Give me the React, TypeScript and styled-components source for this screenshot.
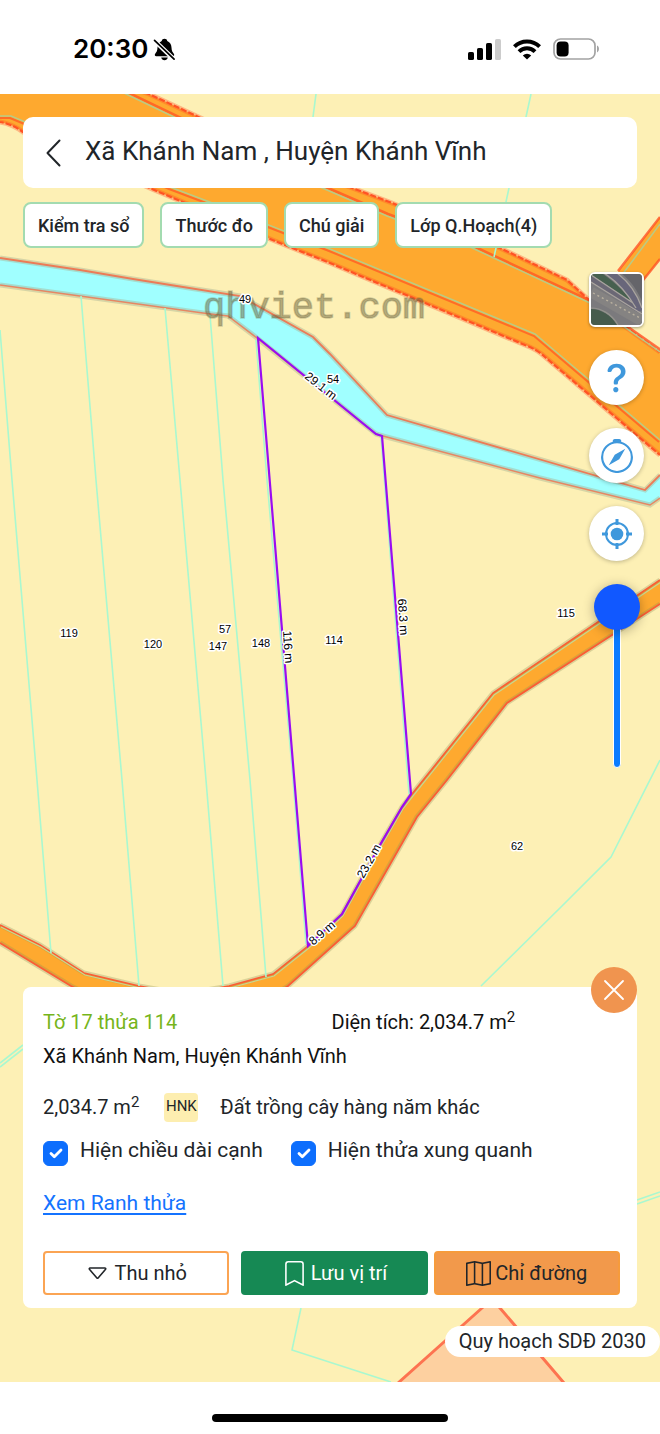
import React, { useState } from "react";
import styled, { createGlobalStyle } from "styled-components";
import { BsBookmark, BsCaretDown, BsCompass, BsMap, BsQuestionLg } from "react-icons/bs";

const GlobalStyle = createGlobalStyle`
  *, *::before, *::after { box-sizing: border-box; }
  html, body { margin: 0; padding: 0; background: #fff; }
  body { font-family: Roboto, "Noto Sans", sans-serif; color: #212529; }
  button, input { font-family: inherit; color: inherit; }
`;

const Page = styled.div`
  display: flex;
  flex-direction: column;
  min-height: 100vh;
`;

const StatusBar = styled.header`
  display: flex;
  justify-content: space-between;
  align-items: center;
  height: 94px;
  padding: 4px 60px 0 73px;
  color: #000;
`;

const StatusGroup = styled.div<{ $gap: number }>`
  display: flex;
  align-items: center;
  gap: ${(p) => p.$gap}px;
`;

const Clock = styled.time`
  font-family: Inter, sans-serif;
  font-weight: 600;
  font-size: 26px;
  line-height: 32px;
`;

const MapArea = styled.main`
  position: relative;
  flex: 1;
  display: flex;
  flex-direction: column;
  padding: 23px 0 25px;
  background: #fdf0b5;
  overflow: hidden;
`;

const MapDrawing = styled.svg`
  position: absolute;
  inset: 0;
  width: 100%;
  height: 100%;
`;

const SearchBar = styled.div`
  position: relative;
  display: flex;
  align-items: center;
  gap: 22px;
  height: 71px;
  margin: 0 23px;
  padding: 0 22px;
  background: #fff;
  border-radius: 10px;
`;

const BackButton = styled.button`
  display: flex;
  padding: 0;
  border: 0;
  background: none;
`;

const PlaceTitle = styled.h1`
  margin: 0;
  padding-bottom: 4px;
  font-size: 26px;
  line-height: 32px;
  font-weight: 400;
`;

const Chips = styled.nav`
  position: relative;
  display: flex;
  flex-wrap: wrap;
  gap: 16px;
  margin: 14px 23px 0;
`;

const Chip = styled.button`
  height: 46px;
  padding: 0 13px;
  border: 2px solid #a3dbb0;
  border-radius: 8px;
  background: #fff;
  font-size: 18px;
  font-weight: 500;
  white-space: nowrap;
`;

const Tools = styled.aside`
  position: relative;
  display: flex;
  flex-direction: column;
  align-items: center;
  align-self: flex-end;
  gap: 23px;
  margin: 24px 16px auto 0;
`;

const LayerButton = styled.button`
  display: flex;
  width: 55px;
  height: 55px;
  padding: 0;
  border: 2px solid #fff;
  border-radius: 6px;
  overflow: hidden;
  background: #777;
  box-shadow: 0 1px 3px rgba(0, 0, 0, 0.35);
`;

const RoundButton = styled.button`
  display: flex;
  align-items: center;
  justify-content: center;
  width: 55px;
  height: 55px;
  padding: 0;
  border: 0;
  border-radius: 50%;
  background: #fff;
  color: #3f98dc;
  box-shadow: 0 1px 4px rgba(0, 0, 0, 0.25);
`;

const SliderBox = styled.div`
  position: relative;
  width: 46px;
  height: 184px;

  &::before {
    content: "";
    position: absolute;
    top: 23px;
    bottom: 0;
    left: 19px;
    width: 8px;
    border: 1px solid #fff;
    border-radius: 4px;
    background: #0a7cff;
  }
`;

const Opacity = styled.input`
  position: relative;
  display: block;
  width: 46px;
  height: 184px;
  margin: 0;
  appearance: none;
  background: transparent;
  writing-mode: vertical-lr;
  direction: rtl;

  &::-webkit-slider-runnable-track {
    width: 46px;
    background: transparent;
  }
  &::-webkit-slider-thumb {
    appearance: none;
    width: 46px;
    height: 46px;
    border-radius: 50%;
    background: #1158ff;
    box-shadow: 0 2px 12px rgba(0, 0, 0, 0.3);
  }
`;

const Card = styled.section`
  position: relative;
  margin: 24px 23px 0;
  padding: 18px 17px 13px 20px;
  background: #fff;
  border-radius: 8px;
  font-size: 20px;
  line-height: 34px;
`;

const CloseButton = styled.button`
  position: absolute;
  top: -20px;
  right: 0;
  display: flex;
  align-items: center;
  justify-content: center;
  width: 46px;
  height: 46px;
  padding: 0;
  border: 0;
  border-radius: 50%;
  background: #f0944f;
`;

const Row = styled.div<{ $top?: number }>`
  display: flex;
  align-items: center;
  height: 34px;
  margin-top: ${(p) => p.$top ?? 0}px;
  white-space: nowrap;
`;

const Cell = styled.span<{ $color?: string }>`
  flex: 1;
  color: ${(p) => p.$color ?? "#111"};
`;

const Sup = styled.sup`
  font-size: 15px;
  line-height: 0;
  vertical-align: 7px;
`;

const Address = styled.div`
  color: #111;
`;

const LandCode = styled.span`
  width: 34px;
  height: 29px;
  margin: 0 22px 0 25px;
  border-radius: 4px;
  background: #fdeeb0;
  font-size: 15px;
  line-height: 27px;
  text-align: center;
`;

const CheckLabel = styled.label`
  display: flex;
  gap: 12px;
  margin-right: 28px;
  font-size: 21px;
`;

const TickBox = styled.span`
  display: grid;
  width: 25px;
  height: 25px;
  margin-top: 8px;

  & > * { grid-area: 1 / 1; }
`;

const Tick = styled.input`
  width: 25px;
  height: 25px;
  margin: 0;
  appearance: none;
  border: 1px solid #0d6efd;
  border-radius: 6px;
  background: #fff;

  &:checked { background: #0d6efd; }
`;

const BorderLink = styled.a`
  color: #1473ff;
  font-size: 21px;
  text-underline-offset: 3px;
`;

const Actions = styled.div`
  display: flex;
  gap: 6px;
  margin-top: 31px;

  & > :first-child { margin-right: 6px; }
`;

const ActionButton = styled.button<{ $bg: string; $line: string; $ink: string }>`
  flex: 1;
  display: flex;
  align-items: center;
  justify-content: center;
  gap: 4px;
  height: 44px;
  padding: 0;
  border: 2px solid ${(p) => p.$line};
  border-radius: 4px;
  background: ${(p) => p.$bg};
  color: ${(p) => p.$ink};
  font-size: 20px;
  line-height: 24px;
  white-space: nowrap;
`;

const PlanBadge = styled.div`
  position: relative;
  align-self: flex-end;
  height: 31px;
  margin-top: 18px;
  padding: 0 14px;
  border-radius: 16px;
  background: #fff;
  font-size: 20px;
  line-height: 31px;
`;

const HomeArea = styled.footer`
  display: flex;
  justify-content: center;
  align-items: flex-end;
  height: 52px;
  padding-bottom: 12px;
`;

const HomeBar = styled.div`
  width: 236px;
  height: 8px;
  border-radius: 4px;
  background: #000;
`;

const roadFill = "#fea92f";
const redLine = "#fb5c35";
const mintLine = "#a9f8d0";

const highwayTop = "M-20 30 L149 94 L347 186 L392 203 L500 248 L567 280 L590 301 L660 352";
const highwayTopInner = "M60 60 L126 94 L320 187 L387 216 L470 247 L590 303 L660 352";
const highwayBottom = "M-10 120 L0 122 Q12 124 23 132 L152 189 L275 241 L330 263 L525 345 Q538 350 545 357 L660 455";
const highwayBottomInner = "M0 116 L11 116 L23 121 L170 187 L215 204 L330 249 L535 334 L548 345 L660 440";
const canalTop = "M0 258 L80 270 L133 279 L183 287 L240 296 L313 337 L330 354 L387 415 L645 490 L660 475";
const canalBottom = "M0 285 L80 296 L167 308 L203 313 L228 316 L257 338 L376 434 L383 436 L540 478 L650 505 L660 498";
const laneTop = "M660 580 L493 693 L412 794 L402 807 L380 845 L342 914 L308 946 L273 974 L229 986 L184 994 L139 986 L84 973 L40 945 L0 925";
const laneBottom = "M660 604 L507 703 L447 780 L417 817 L355 926 L288 986 L250 1010 L120 1010 L71 986 L0 943";

const parcelLines = [
  "M0 330 L12 480 L37 780 L51 953",
  "M81 296 L96 480 L122 780 L139 986",
  "M165 308 L180 480 L206 780 L223 986",
  "M210 315 L223 480 L250 780 L266 977",
  "M256 340 L267 480 L293 780 L306 944",
  "M381 437 L409 794",
  "M660 760 L611 857 L562 906 L481 986",
  "M316 94 L313 117",
  "M531 94 L526 117 L509 188 L494 257",
  "M0 1063 L23 1045",
  "M0 1067 L23 1049",
  "M637 1200 L660 1192",
  "M637 1204 L660 1196",
  "M301 1308 L292 1350 L391 1382",
];

const parcelLabels: { text: string; x: number; y: number; turn?: number }[] = [
  { text: "49", x: 245, y: 299 },
  { text: "54", x: 333, y: 379 },
  { text: "119", x: 69, y: 633 },
  { text: "120", x: 153, y: 644 },
  { text: "57", x: 225, y: 629 },
  { text: "147", x: 218, y: 646 },
  { text: "148", x: 261, y: 643 },
  { text: "114", x: 334, y: 640 },
  { text: "115", x: 566, y: 613 },
  { text: "62", x: 517, y: 846 },
  { text: "29.1 m", x: 321, y: 386, turn: 38 },
  { text: "116 m", x: 288, y: 647, turn: 86 },
  { text: "68.3 m", x: 403, y: 617, turn: 86 },
  { text: "23.2 m", x: 369, y: 861, turn: -61 },
  { text: "8.9 m", x: 322, y: 933, turn: -41 },
];

function LandMap() {
  return (
    <MapDrawing viewBox="0 94 660 1288" preserveAspectRatio="xMidYMid slice" aria-hidden="true">
      <path d="M0 94 L149 94 L347 186 L392 203 L500 248 L567 280 L590 301 L660 352 L660 455 L545 357 Q538 350 525 345 L330 263 L275 241 L152 189 L23 132 Q12 124 0 122 Z" fill={roadFill} />
      <path d="M660 217 L618 272 L618 325 L645 278 L660 259 Z" fill={roadFill} />
      <g fill="none" stroke="#ff5324">
        <path d={highwayTop} strokeWidth="5" strokeOpacity="0.35" />
        <path d={highwayBottom} strokeWidth="5" strokeOpacity="0.35" />
        <g strokeWidth="2.2" strokeDasharray="6 2">
          <path d={highwayTop} />
          <path d={highwayBottom} />
        </g>
        <path d={highwayTopInner} strokeWidth="2.5" strokeOpacity="0.75" transform="translate(1 -2)" />
        <path d={highwayBottomInner} strokeWidth="2" strokeOpacity="0.7" transform="translate(-1 2)" />
        <path d="M660 217 L618 271 M660 259 L640 284" strokeWidth="2.5" strokeOpacity="0.8" />
      </g>
      <g fill="none" stroke="#b9cb85" strokeWidth="1.5">
        <path d={highwayTopInner} />
        <path d={highwayBottomInner} />
        <path d="M660 224 L622 275" />
      </g>

      <path d="M0 258 L80 270 L133 279 L183 287 L240 296 L313 337 L330 354 L387 415 L645 490 L660 475 L660 498 L650 505 L540 478 L383 436 L376 434 L257 338 L228 316 L203 313 L167 308 L80 296 L0 285 Z" fill="#a0ffff" />
      <g fill="none">
        <path d={canalTop} stroke="#a8b494" strokeWidth="5" strokeOpacity="0.45" />
        <path d={canalBottom} stroke="#a8b494" strokeWidth="5" strokeOpacity="0.45" />
        <path d={canalTop} stroke={redLine} strokeWidth="1.8" strokeOpacity="0.75" />
        <path d={canalBottom} stroke={redLine} strokeWidth="1.5" strokeOpacity="0.65" />
      </g>

      <path d="M660 580 L493 693 L412 794 L402 807 L380 845 L342 914 L308 946 L273 974 L229 986 L184 994 L139 986 L84 973 L40 945 L0 925 L0 943 L71 986 L120 1010 L250 1010 L288 986 L355 926 L417 817 L447 780 L507 703 L660 604 Z" fill={roadFill} />
      <g fill="none">
        <path d={laneTop} stroke="#8f8d55" strokeWidth="5" strokeOpacity="0.3" />
        <path d={laneBottom} stroke="#8f8d55" strokeWidth="5" strokeOpacity="0.3" />
        <path d={laneTop} stroke={redLine} strokeWidth="1.6" />
        <path d={laneBottom} stroke={redLine} strokeWidth="1.8" />
        <path d={laneTop} stroke="#c8d692" strokeWidth="1.2" transform="translate(1 2)" />
      </g>

      <path d="M398 1382 L482 1308 L491 1300 L500 1308 L564 1382 Z" fill="#fdd0a0" />
      <path d="M398 1383 L482 1308 L491 1300 L500 1308 L564 1383" fill="none" stroke="#fd7350" strokeWidth="3" />

      <g fill="none" stroke={mintLine} strokeWidth="1.6">
        {parcelLines.map((d) => (
          <path key={d} d={d} />
        ))}
      </g>

      <text x="203" y="318" fontFamily="Liberation Mono, monospace" fontSize="37" fill="#6d6740" fillOpacity="0.5" stroke="#6d6740" strokeOpacity="0.3" strokeWidth="1.6">
        qhviet.com
      </text>

      <path d="M258 338 L376 434 L382 436 L411 794 L402 807 L380 845 L342 914 L308 946 Z" fill="none" stroke="#9a0cf2" strokeWidth="2.2" />

      <g fontFamily="Liberation Sans, Arial, sans-serif" fontSize="11" fill="#000" stroke="#fff" strokeWidth="3" strokeLinejoin="round" paintOrder="stroke" textAnchor="middle">
        {parcelLabels.map((l) => (
          <text key={l.text} x={l.x} y={l.y + 4} fontSize={l.turn ? 12 : 11} transform={l.turn ? `rotate(${l.turn} ${l.x} ${l.y})` : undefined}>
            {l.text}
          </text>
        ))}
      </g>
    </MapDrawing>
  );
}

const BellOff = () => (
  <svg width="23" height="23" viewBox="0 0 24 24" aria-hidden="true">
    <path d="M12 0.8 C13.6 .8 14.6 1.8 14.9 3 C18 4.2 19.2 7 19.3 10 C19.4 13.8 20.5 15 21.7 16.4 C22.6 17.6 22 19 20.6 19 H3.4 C2 19 1.4 17.6 2.3 16.4 C3.5 15 4.6 13.8 4.7 10 C4.8 7 6 4.2 9.1 3 C9.4 1.8 10.4 .8 12 .8 Z M8.6 20.3 H15.4 C15 22.2 13.8 23.2 12 23.2 C10.2 23.2 9 22.2 8.6 20.3 Z" fill="#000" />
    <path d="M1 2.2 L22.5 22.8" stroke="#fff" strokeWidth="4.6" />
    <path d="M1.6 2.4 L22 22" stroke="#000" strokeWidth="1.8" strokeLinecap="round" />
  </svg>
);

const Signal = () => (
  <svg width="33" height="21" viewBox="0 0 33 21" aria-hidden="true">
    <rect x="0" y="13" width="6" height="8" rx="1.6" />
    <rect x="9" y="9" width="6" height="12" rx="1.6" />
    <rect x="18" y="4" width="6" height="17" rx="1.6" />
    <rect x="27" y="0" width="6" height="21" rx="1.6" fill="#ccc" />
  </svg>
);

const Wifi = () => (
  <svg width="28" height="21" viewBox="0 0 28 21" aria-hidden="true">
    <g fill="none" stroke="#000" strokeWidth="4">
      <path d="M1.4 7.6 A18 18 0 0 1 26.6 7.6" />
      <path d="M6 12.6 A11.4 11.4 0 0 1 22 12.6" />
    </g>
    <path d="M14 20.6 L9.8 16.4 A6.2 6.2 0 0 1 18.2 16.4 Z" />
  </svg>
);

const Battery = () => (
  <svg width="47" height="22" viewBox="0 0 47 22" aria-hidden="true">
    <rect x="1" y="1" width="41" height="20" rx="6.5" fill="none" stroke="#a3a3a3" strokeWidth="1.7" />
    <rect x="3.6" y="3.6" width="12" height="14.8" rx="4" />
    <path d="M44 7.6 C46.6 8.6 46.6 13.4 44 14.4 Z" fill="#a3a3a3" />
  </svg>
);

const SatelliteThumb = () => (
  <svg width="51" height="51" viewBox="0 0 51 51" aria-hidden="true">
    <rect width="51" height="51" fill="#7b7a7d" />
    <path d="M12 0 C24 8 36 20 44 32 L0 6 V0 Z" fill="#47604f" />
    <path d="M0 4 L46 35" stroke="#6b6875" strokeWidth="6" />
    <path d="M17 -2 C30 6 42 20 49 37" fill="none" stroke="#68667a" strokeWidth="8" />
    <path d="M31 0 H51 V27 C46 16 40 7 31 0 Z" fill="#65656a" />
    <path d="M13 -1 C27 8 37 20 45 34 M26 -1 C38 8 46 20 51 34 M0 8 L51 40 M0 1 L42 29" fill="none" stroke="#a9a49e" strokeWidth="1.3" />
    <path d="M0 18 L51 47" stroke="#858382" strokeWidth="11" />
    <path d="M2 19 L49 44" stroke="#b9b09f" strokeWidth="1.4" strokeDasharray="2 3" />
    <path d="M0 35 C10 35 20 41 26 51 H0 Z" fill="#465b4d" />
    <path d="M0 34 C10 34 21 40 27 51" fill="none" stroke="#94938d" strokeWidth="1.2" />
  </svg>
);

const Locate = () => (
  <svg width="32" height="32" viewBox="0 0 32 32" aria-hidden="true">
    <circle cx="16" cy="16" r="11" fill="none" stroke="currentColor" strokeWidth="2" />
    <circle cx="16" cy="16" r="6.3" fill="currentColor" />
    <path d="M16 1 V7 M16 25 V31 M1 16 H7 M25 16 H31" stroke="currentColor" strokeWidth="3" />
  </svg>
);

function CheckItem({ label }: { label: string }) {
  const [on, setOn] = useState(true);
  return (
    <CheckLabel>
      <TickBox>
        <Tick type="checkbox" checked={on} onChange={() => setOn(!on)} />
        {on && (
          <svg width="25" height="25" viewBox="0 0 25 25" pointerEvents="none" aria-hidden="true">
            <path d="M8 12.5 L11.3 15.8 L18 9" fill="none" stroke="#fff" strokeWidth="2.8" strokeLinecap="round" strokeLinejoin="round" />
          </svg>
        )}
      </TickBox>
      {label}
    </CheckLabel>
  );
}

export default function App() {
  return (
    <Page>
      <GlobalStyle />
      <StatusBar>
        <StatusGroup $gap={5}>
          <Clock>20:30</Clock>
          <BellOff />
        </StatusGroup>
        <StatusGroup $gap={12}>
          <Signal />
          <Wifi />
          <Battery />
        </StatusGroup>
      </StatusBar>

      <MapArea>
        <LandMap />

        <SearchBar>
          <BackButton aria-label="Quay lại">
            <svg width="18" height="28" viewBox="0 0 18 28" aria-hidden="true">
              <path d="M14.5 1.5 L2.5 14 L14.5 26.5" fill="none" stroke="#212529" strokeWidth="2" strokeLinecap="round" strokeLinejoin="round" />
            </svg>
          </BackButton>
          <PlaceTitle>Xã Khánh Nam , Huyện Khánh Vĩnh</PlaceTitle>
        </SearchBar>

        <Chips>
          <Chip>Kiểm tra sổ</Chip>
          <Chip>Thước đo</Chip>
          <Chip>Chú giải</Chip>
          <Chip>Lớp Q.Hoạch(4)</Chip>
        </Chips>

        <Tools>
          <LayerButton aria-label="Lớp nền">
            <SatelliteThumb />
          </LayerButton>
          <RoundButton aria-label="Trợ giúp">
            <BsQuestionLg size={38} />
          </RoundButton>
          <RoundButton aria-label="La bàn">
            <BsCompass size={34} />
          </RoundButton>
          <RoundButton aria-label="Vị trí của tôi">
            <Locate />
          </RoundButton>
          <SliderBox>
            <Opacity type="range" aria-label="Độ mờ" min={0} max={100} defaultValue={100} />
          </SliderBox>
        </Tools>

        <Card>
          <CloseButton aria-label="Đóng">
            <svg width="22" height="22" viewBox="0 0 22 22" aria-hidden="true">
              <path d="M2 2 L20 20 M20 2 L2 20" stroke="#fff" strokeWidth="1.8" strokeLinecap="round" />
            </svg>
          </CloseButton>
          <Row>
            <Cell $color="#76b51b">Tờ 17 thửa 114</Cell>
            <Cell>
              Diện tích: 2,034.7 m<Sup>2</Sup>
            </Cell>
          </Row>
          <Row>
            <Address>Xã Khánh Nam, Huyện Khánh Vĩnh</Address>
          </Row>
          <Row $top={17}>
            <span>
              2,034.7 m<Sup>2</Sup>
            </span>
            <LandCode>HNK</LandCode>
            <span>Đất trồng cây hàng năm khác</span>
          </Row>
          <Row $top={9}>
            <CheckItem label="Hiện chiều dài cạnh" />
            <CheckItem label="Hiện thửa xung quanh" />
          </Row>
          <Row $top={19}>
            <BorderLink href="#ranh-thua">Xem Ranh thửa</BorderLink>
          </Row>
          <Actions>
            <ActionButton $bg="#fff" $line="#fba453" $ink="#212529">
              <BsCaretDown size={25} />
              Thu nhỏ
            </ActionButton>
            <ActionButton $bg="#168954" $line="#168954" $ink="#fff">
              <BsBookmark size={25} />
              Lưu vị trí
            </ActionButton>
            <ActionButton $bg="#f2994b" $line="#f69b3c" $ink="#212529">
              <BsMap size={25} />
              Chỉ đường
            </ActionButton>
          </Actions>
        </Card>

        <PlanBadge>Quy hoạch SDĐ 2030</PlanBadge>
      </MapArea>

      <HomeArea>
        <HomeBar />
      </HomeArea>
    </Page>
  );
}
